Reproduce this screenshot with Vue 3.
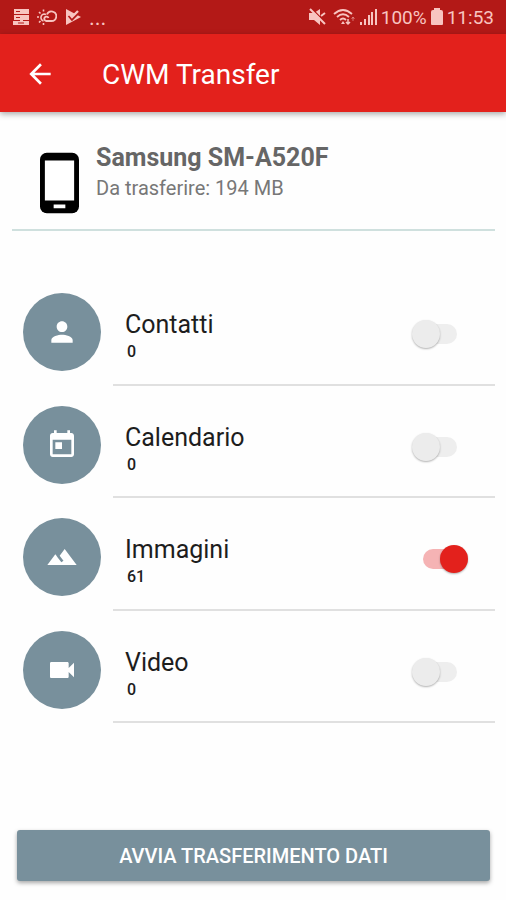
<script setup>
import { ref } from 'vue'

const items = ref([
  { id: 'contacts', name: 'Contatti', count: 0, enabled: false },
  { id: 'calendar', name: 'Calendario', count: 0, enabled: false },
  { id: 'images', name: 'Immagini', count: 61, enabled: true },
  { id: 'video', name: 'Video', count: 0, enabled: false },
])

const icons = {
  contacts: 'M12 12c2.21 0 4-1.79 4-4s-1.79-4-4-4-4 1.79-4 4 1.79 4 4 4zm0 2c-2.67 0-8 1.34-8 4v2h16v-2c0-2.66-5.33-4-8-4z',
  calendar: 'M19 3h-1V1h-2v2H8V1H6v2H5c-1.11 0-2 .9-2 2v14c0 1.1.89 2 2 2h14c1.1 0 2-.9 2-2V5c0-1.1-.9-2-2-2zm0 16H5V8h14v11zM7 10h5v5H7z',
  images: 'M14 6l-3.75 5 2.85 3.8-1.6 1.2C9.81 13.75 7 10 7 10l-6 8h22L14 6z',
  video: 'M17 10.500V7c0-.55-.45-1-1-1H4c-.55 0-1 .45-1 1v10c0 .55.45 1 1 1h12c.55 0 1-.45 1-1v-3.500l4 4v-11l-4 4z',
}
</script>

<template>
  <div class="screen">
    <div class="status">
      <div class="notifications">
        <svg class="glyph" viewBox="0 0 18 18" aria-hidden="true">
          <path d="M2 1h15v5H2zM2 7h15v5H2zM8 12h3v1H8zM1 13h16v4H1z" fill="currentColor" />
          <path d="M4 3.500h4M4 9.500h4M6 15h6" stroke="#b31917" />
        </svg>
        <svg class="weather" viewBox="0 0 20 18" fill="none" stroke="currentColor" aria-hidden="true">
          <path d="M9 6.500a3.500 3.500 0 1 0-2.500 6.500M6.500 1.500v2M2 4l1.500 1.500M0 9h2M2 14.500l1.500-1.500M6.500 15v2" stroke-width="1.600" />
          <path d="M9 13h5.500a4.800 4.800 0 1 0-4.500-6.500M9 13a2.200 2.200 0 1 1 2.500-3" stroke-width="1.800" />
        </svg>
        <svg class="glyph" viewBox="0 0 18 18" aria-hidden="true">
          <path d="M2 1l15 8L2 17z" fill="currentColor" />
          <path d="M5 7.500l3 3.500 8-8" fill="none" stroke="#b31917" stroke-width="3" />
          <path d="M5 5.500l3 3.500 6-6" fill="none" stroke="currentColor" stroke-width="2.400" />
        </svg>
        <span class="more">...</span>
      </div>
      <div class="system">
        <svg class="glyph" viewBox="0 0 18 18" aria-hidden="true">
          <path d="M1 5h5l6-4v16l-6-5H1z" fill="currentColor" />
          <path d="M3 0l15 15" stroke="#b31917" stroke-width="1.500" />
          <path d="M2 1l15 15M13 8l4-3" stroke="currentColor" stroke-width="2" />
        </svg>
        <svg class="wifi" viewBox="0 0 22 18" fill="none" stroke="currentColor" stroke-width="1.800" aria-hidden="true">
          <path d="M1 6q9-8 18 0M4 9q6-5.500 12 0M7 12q3-3 6 0" />
          <path d="M10 13l2 3h-4z" fill="currentColor" stroke="none" />
          <path d="M15 11v5M13 14l2 2 2-2" stroke-width="1.500" />
          <path d="M20 13v-4M18.500 11l1.500-2 1.500 2" stroke-width="1" opacity=".5" />
        </svg>
        <svg class="glyph" viewBox="0 0 18 18" fill="currentColor" aria-hidden="true">
          <path d="M1 14h2v3H1zM5 11h2v6H5zM9 7h2v10H9zM12 4h2v13h-2zM16 1h2v16h-2z" />
        </svg>
        <span>100%</span>
        <svg class="battery" viewBox="0 0 12 18" fill="currentColor" aria-hidden="true">
          <path d="M3 0h6v2h1q2 0 2 2v12q0 1-1 1H1q-1 0-1-1V4q0-2 2-2h1z" />
        </svg>
        <span>11:53</span>
      </div>
    </div>

    <header class="appbar">
      <button class="back" type="button" aria-label="Indietro">
        <svg viewBox="0 0 24 24" fill="currentColor" aria-hidden="true">
          <path d="M20 11H7.830l5.590-5.590L12 4l-8 8 8 8 1.410-1.410L7.830 13H20v-2z" />
        </svg>
      </button>
      <h1>CWM Transfer</h1>
    </header>

    <main>
      <section class="device">
        <svg class="phone" viewBox="0 0 40 62" aria-hidden="true">
          <rect width="40" height="62" rx="7" />
          <path d="M5 8h30v41H5zM14 53h12v4H14z" fill="#fff" />
        </svg>
        <div>
          <h2>Samsung SM-A520F</h2>
          <p>Da trasferire: 194 MB</p>
        </div>
      </section>

      <ul class="list">
        <li v-for="item in items" :key="item.id" class="row">
          <span class="avatar">
            <svg viewBox="0 0 24 24" fill="currentColor" aria-hidden="true">
              <path :d="icons[item.id]" />
            </svg>
          </span>
          <div class="body">
            <label :for="item.id">
              <span class="name">{{ item.name }}</span>
              <span class="count">{{ item.count }}</span>
            </label>
            <input :id="item.id" v-model="item.enabled" class="switch" type="checkbox" />
          </div>
        </li>
      </ul>

      <button class="start" type="button">AVVIA TRASFERIMENTO DATI</button>
    </main>
  </div>
</template>

<style>
body {
  margin: 0;
  background: #fefefe;
}
</style>

<style scoped>
.screen {
  display: flex;
  flex-direction: column;
  min-height: 100vh;
  font-family: Roboto, "Liberation Sans", sans-serif;
  color: #1d1d1d;
}

.status {
  display: flex;
  align-items: center;
  justify-content: space-between;
  height: 34px;
  padding: 0 12px;
  background: #b31917;
  color: #f8c4c0;
  font-size: 19px;
}

.notifications,
.system {
  display: flex;
  align-items: center;
}

.notifications {
  gap: 7px;
}

.system {
  gap: 4px;
}

.glyph {
  width: 18px;
  height: 18px;
}

.weather {
  width: 20px;
  height: 18px;
}

.wifi {
  width: 22px;
  height: 18px;
  margin-left: 3px;
}

.battery {
  width: 12px;
  height: 18px;
}

.more {
  font-size: 22px;
}

.appbar {
  display: flex;
  align-items: center;
  gap: 46px;
  height: 78px;
  padding: 2px 24px 0;
  box-sizing: border-box;
  background: #e3211c;
  color: #fff;
  box-shadow: 0 2px 6px rgba(0, 0, 0, 0.35);
}

.back {
  display: flex;
  padding: 0;
  border: 0;
  background: none;
  color: inherit;
}

.back svg {
  width: 32px;
  height: 32px;
}

h1 {
  margin: 0;
  font-size: 28px;
  font-weight: 400;
}

main {
  display: flex;
  flex: 1;
  flex-direction: column;
  padding: 28px 11px 19px 12px;
}

.device {
  display: flex;
  gap: 17px;
  padding: 0 0 15px 28px;
  border-bottom: 2px solid #cfe0de;
}

.phone {
  width: 39px;
  height: 62px;
  margin-top: 12px;
}

h2 {
  margin: 4px 0 0;
  color: #666;
  font-size: 25px;
  font-weight: 700;
  line-height: 28px;
}

p {
  margin: 4px 0 0;
  color: #777;
  font-size: 20px;
  line-height: 24px;
}

.list {
  display: flex;
  flex: 1;
  flex-direction: column;
  margin: 42px 0 107px;
  padding: 0;
  list-style: none;
}

.row {
  display: flex;
  flex: 1;
  gap: 12px;
  padding-left: 11px;
}

.avatar {
  display: flex;
  align-items: center;
  justify-content: center;
  width: 78px;
  height: 78px;
  margin-top: 20px;
  border-radius: 50%;
  background: #78909c;
  color: #fff;
}

.avatar svg {
  width: 32px;
  height: 32px;
}

.body {
  display: flex;
  flex: 1;
  align-items: center;
  justify-content: space-between;
  padding: 12px 27px 0 12px;
  border-bottom: 2px solid #e0e0e0;
}

label {
  padding-top: 4px;
}

.name,
.count {
  display: block;
}

.name {
  font-size: 25px;
  line-height: 32px;
}

.count {
  padding-left: 2px;
  font-size: 16px;
  font-weight: 500;
  line-height: 22px;
}

.switch {
  display: flex;
  align-items: center;
  width: 56px;
  height: 28px;
  margin: 0;
  padding: 0 11px;
  box-sizing: border-box;
  appearance: none;
}

.switch::before {
  content: "";
  flex: none;
  width: 34px;
  height: 20px;
  border-radius: 10px;
  background: #eee;
}

.switch::after {
  content: "";
  flex: none;
  width: 28px;
  height: 28px;
  margin-left: -45px;
  border-radius: 50%;
  background: #ececec;
  box-shadow: 0 1px 2px rgba(0, 0, 0, 0.3);
}

.switch:checked::before {
  background: #f5b3b4;
}

.switch:checked::after {
  margin-left: -17px;
  background: #e3211c;
}

.start {
  height: 51px;
  margin: 0 5px;
  border: 0;
  border-radius: 3px;
  background: #78909c;
  color: #fff;
  font-family: inherit;
  font-size: 20px;
  font-weight: 500;
  box-shadow: 0 2px 4px rgba(0, 0, 0, 0.35);
}
</style>
